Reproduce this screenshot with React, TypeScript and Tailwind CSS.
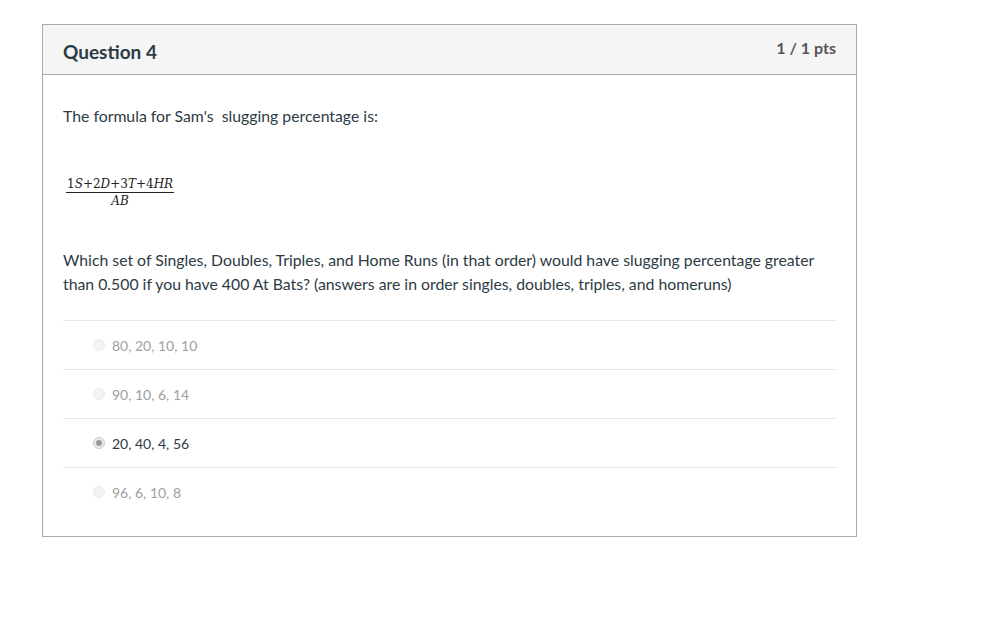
const answers = [
  { text: "80, 20, 10, 10", selected: false },
  { text: "90, 10, 6, 14", selected: false },
  { text: "20, 40, 4, 56", selected: true },
  { text: "96, 6, 10, 8", selected: false },
];

function Radio({ checked }: { checked: boolean }) {
  return (
    <span
      className={`flex h-[12px] w-[12px] items-center justify-center rounded-full border ${
        checked ? "border-[#c8c8c8] bg-[#ececec]" : "border-[#ececec] bg-[#f3f3f3]"
      }`}
    >
      {checked && <span className="h-[6px] w-[6px] rounded-full bg-[#9a9a9a]" />}
    </span>
  );
}

export default function App() {
  return (
    <div className="min-h-[630px] bg-white pl-[42px] pt-[24px] font-['Lato',sans-serif] text-[#2d3b45]">
      <div className="w-[815px] border border-[#aaaaaa]">
        <div className="flex h-[50px] items-start justify-between border-b border-[#aaaaaa] bg-[#f5f5f5] px-[20px]">
          <h2 className="pt-[15px] text-[19px] font-bold leading-[24px] text-[#2d3b45]">Question 4</h2>
          <span className="pt-[12px] text-[16px] font-bold leading-[22px] text-[#555555]">1 / 1 pts</span>
        </div>
        <div className="px-[20px] pb-[20px] pt-[29px]">
          <p className="text-[15.8px] leading-[24px]">The formula for Sam's&nbsp; slugging percentage is:</p>
          <div className="mt-[49px] inline-flex flex-col items-center pl-[3px] font-['DejaVu_Serif',serif] text-[12px] italic leading-[14px] text-[#222]">
            <span className="border-b border-[#222] px-[1px] pb-[1px]">
              <span className="not-italic">1</span>S<span className="not-italic">+2</span>D<span className="not-italic">+3</span>T<span className="not-italic">+4</span>HR
            </span>
            <span className="pt-[1px]">AB</span>
          </div>
          <p className="mt-[40px] text-[15.8px] leading-[24px]">
            Which set of Singles, Doubles, Triples, and Home Runs (in that order) would have slugging percentage greater
            than 0.500 if you have 400 At Bats? (answers are in order singles, doubles, triples, and homeruns)
          </p>
          <div className="mt-[24px]">
            {answers.map((a) => (
              <div key={a.text} className="flex h-[49px] items-center gap-[7px] border-t border-[#e6e6e6] pl-[30px]">
                <Radio checked={a.selected} />
                <span className={`text-[14px] ${a.selected ? "text-[#2d3b45]" : "text-[#a0a0a0]"}`}>{a.text}</span>
              </div>
            ))}
          </div>
        </div>
      </div>
    </div>
  );
}
